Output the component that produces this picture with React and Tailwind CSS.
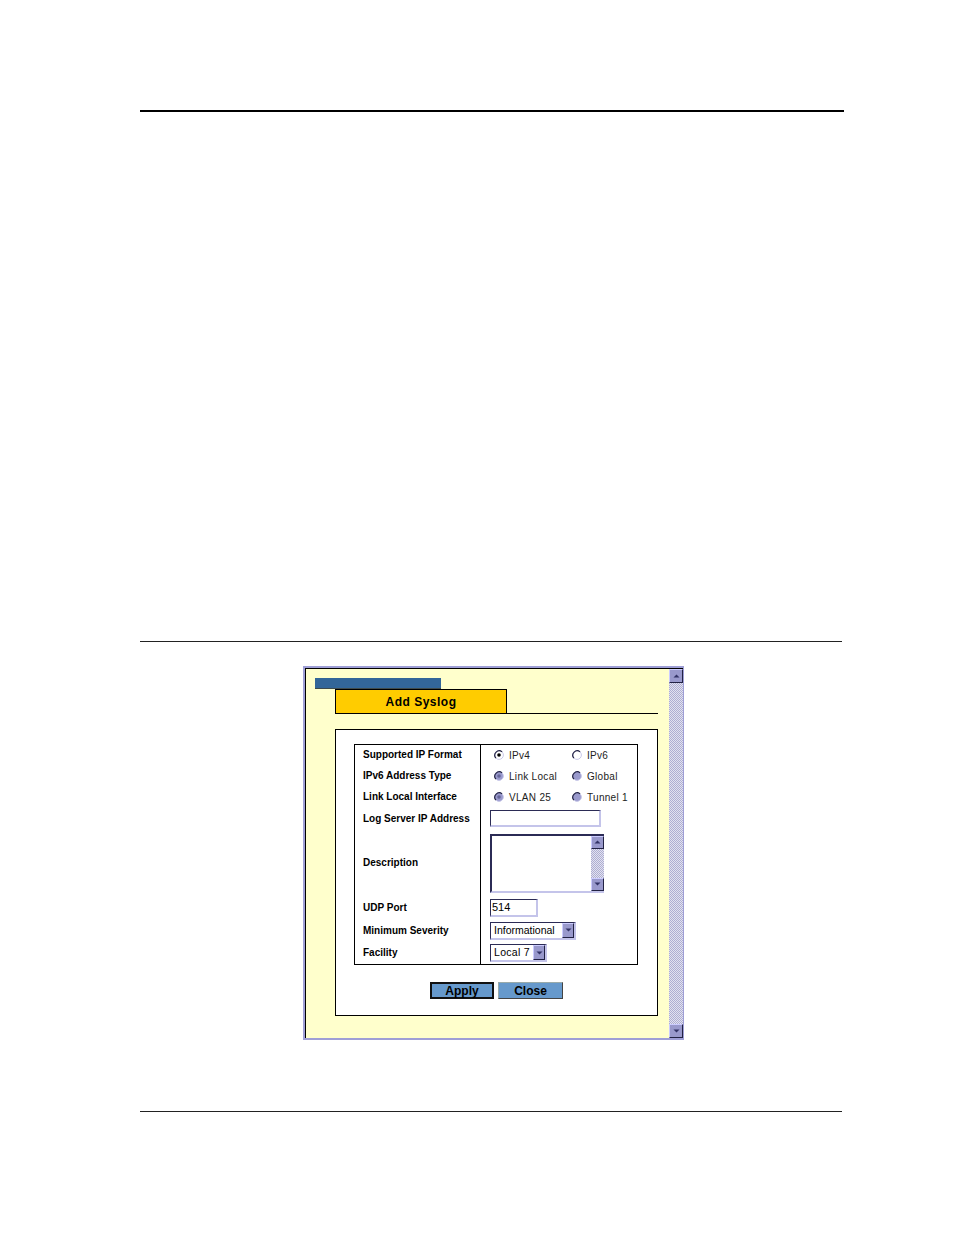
import React from 'react';

const Radio = ({ checked, disabled }) => {
    const fill = disabled ? '#9999cc' : '#ffffff';
    const dot = disabled ? '#666699' : '#000000';
    return (
        <svg width="10" height="10" viewBox="0 0 10 10" className="shrink-0">
            <circle cx="5" cy="5" r="4.4" fill={fill} stroke="#c8c8e8" strokeWidth="1" />
            <path d="M1.9 8.1 A4.4 4.4 0 0 1 8.1 1.9" stroke="#222244" fill="none" strokeWidth="1.2" />
            {checked && <circle cx="5" cy="5" r="1.8" fill={dot} />}
        </svg>
    );
};

const ArrowButton = ({ up, className = '' }) => (
    <div className={`flex items-center justify-center bg-[#9999cc] border-t border-l border-t-[#ccccff] border-l-[#ccccff] border-b border-r border-b-[#222244] border-r-[#222244] ${className}`}>
        <svg width="7" height="4" viewBox="0 0 7 4">
            <path d={up ? 'M0.5 3.5 L3.5 0.5 L6.5 3.5 Z' : 'M0.5 0.5 L3.5 3.5 L6.5 0.5 Z'} fill="#333366" />
        </svg>
    </div>
);

const Track = ({ className = '' }) => (
    <div className={`bg-[image:repeating-conic-gradient(#e2e2f0_0%_25%,#aeaed2_0%_50%)] bg-[length:2px_2px] bg-size-[2px_2px] ${className}`} />
);

const RadioRow = ({ a, b }) => (
    <div className="flex items-center h-full pl-[13px]">
        <div className="flex items-center w-[78px]">
            <Radio checked={a.checked} disabled={a.disabled} />
            <span className="ml-[5px] text-[10px] tracking-[0.3px] text-[#222] leading-none mt-[2px]">{a.label}</span>
        </div>
        <div className="flex items-center">
            <Radio checked={b.checked} disabled={b.disabled} />
            <span className="ml-[5px] text-[10px] tracking-[0.3px] text-[#222] leading-none mt-[2px]">{b.label}</span>
        </div>
    </div>
);

const fieldBorder = 'border-t border-l border-t-[#2b2b55] border-l-[#2b2b55] border-b-2 border-r-2 border-b-[#c4c4ea] border-r-[#c4c4ea] bg-white';

const Label = ({ children }) => (
    <div className="flex items-center h-full pl-[8px] text-[10px] font-bold text-black leading-none">{children}</div>
);

const App = () => {
    const rows = [
        { h: 'h-[20px]', label: 'Supported IP Format', field: <RadioRow a={{ label: 'IPv4', checked: true }} b={{ label: 'IPv6' }} /> },
        { h: 'h-[21px]', label: 'IPv6 Address Type', field: <RadioRow a={{ label: 'Link Local', checked: true, disabled: true }} b={{ label: 'Global', disabled: true }} /> },
        { h: 'h-[21px]', label: 'Link Local Interface', field: <RadioRow a={{ label: 'VLAN 25', checked: true, disabled: true }} b={{ label: 'Tunnel 1', disabled: true }} /> },
        {
            h: 'h-[23px]',
            label: 'Log Server IP Address',
            field: (
                <div className="flex items-center h-full pl-[9px]">
                    <div className={`w-[111px] h-[17px] ${fieldBorder}`} />
                </div>
            ),
        },
        {
            h: 'h-[66px]',
            label: 'Description',
            field: (
                <div className="flex items-center h-full pl-[9px]">
                    <div className="flex w-[114px] h-[59px] bg-white border-t-2 border-l-2 border-t-[#2b2b55] border-l-[#2b2b55] border-b-2 border-b-[#c4c4ea]">
                        <div className="flex-1" />
                        <div className="flex flex-col w-[13px]">
                            <ArrowButton up className="h-[13px]" />
                            <Track className="flex-1" />
                            <ArrowButton className="h-[13px]" />
                        </div>
                    </div>
                </div>
            ),
        },
        {
            h: 'h-[23px]',
            label: 'UDP Port',
            field: (
                <div className="flex items-center h-full pl-[9px]">
                    <div className={`w-[48px] h-[18px] flex items-center pl-[1px] text-[11px] leading-none text-black ${fieldBorder}`}>514</div>
                </div>
            ),
        },
        {
            h: 'h-[23px]',
            label: 'Minimum Severity',
            field: (
                <div className="flex items-center h-full pl-[9px]">
                    <div className={`w-[86px] h-[18px] flex items-center ${fieldBorder}`}>
                        <span className="flex-1 pl-[3px] text-[10.5px] leading-none text-black">Informational</span>
                        <ArrowButton className="w-[12px] h-[15px]" />
                    </div>
                </div>
            ),
        },
        {
            h: 'h-[22px]',
            label: 'Facility',
            field: (
                <div className="flex items-center h-full pl-[9px]">
                    <div className={`w-[57px] h-[18px] flex items-center ${fieldBorder}`}>
                        <span className="flex-1 pl-[3px] text-[10.5px] tracking-[0.3px] leading-none text-black">Local 7</span>
                        <ArrowButton className="w-[12px] h-[15px]" />
                    </div>
                </div>
            ),
        },
    ];

    return (
        <div className="w-[954px] h-[1235px] bg-white pt-[110px] font-['Liberation_Sans',Arial,sans-serif] overflow-hidden">
            <div className="ml-[140px] w-[704px] h-[2px] bg-black" />
            <div className="ml-[140px] mt-[529px] w-[702px] h-px bg-[#222]" />

            {/* Add Syslog window */}
            <div className="ml-[303px] mt-[24px] w-[381px] h-[374px] border-t-2 border-l-2 border-b-2 border-r border-[#9f9fd6]">
                <div className="flex h-full border-t border-l border-black">
                    <div className="w-[363px] h-full bg-[#ffffcc] pt-[9px]">
                        <div className="ml-[9px] w-[126px] h-[11px] bg-[#336699] border-b border-[#3f4a4a]" />
                        <div className="ml-[29px] w-[323px] flex border-b border-black">
                            <div className="w-[172px] h-[24px] bg-[#ffcc00] border-l border-t border-r border-black flex items-center justify-center">
                                <span className="text-[12px] font-bold tracking-[0.5px] text-black leading-none">Add Syslog</span>
                            </div>
                        </div>

                        <div className="ml-[29px] mt-[15px] w-[323px] h-[287px] bg-white border border-black pt-[14px] pl-[18px]">
                            <div className="w-[284px] border border-black flex">
                                <div className="w-[126px] border-r border-black">
                                    {rows.map((r) => (
                                        <div key={r.label} className={r.h}>
                                            <Label>{r.label}</Label>
                                        </div>
                                    ))}
                                </div>
                                <div className="flex-1">
                                    {rows.map((r) => (
                                        <div key={r.label} className={r.h}>
                                            {r.field}
                                        </div>
                                    ))}
                                </div>
                            </div>

                            <div className="mt-[17px] w-[284px] flex justify-center gap-[4px] pl-[1px]">
                                <button className="w-[64px] h-[17px] bg-[#6699cc] border-2 border-[#111] flex items-center justify-center text-[12px] font-bold text-black leading-none">
                                    Apply
                                </button>
                                <button className="w-[65px] h-[17px] bg-[#6699cc] border border-t-[#9aa] border-l-[#9aa] border-b-[#444] border-r-[#444] flex items-center justify-center text-[12px] font-bold text-black leading-none">
                                    Close
                                </button>
                            </div>
                        </div>
                    </div>

                    {/* window scrollbar */}
                    <div className="w-[14px] h-full flex flex-col">
                        <ArrowButton up className="h-[14px]" />
                        <Track className="flex-1" />
                        <ArrowButton className="h-[14px]" />
                    </div>
                </div>
            </div>

            <div className="ml-[140px] mt-[71px] w-[702px] h-px bg-[#222]" />
        </div>
    );
};

export default App;
